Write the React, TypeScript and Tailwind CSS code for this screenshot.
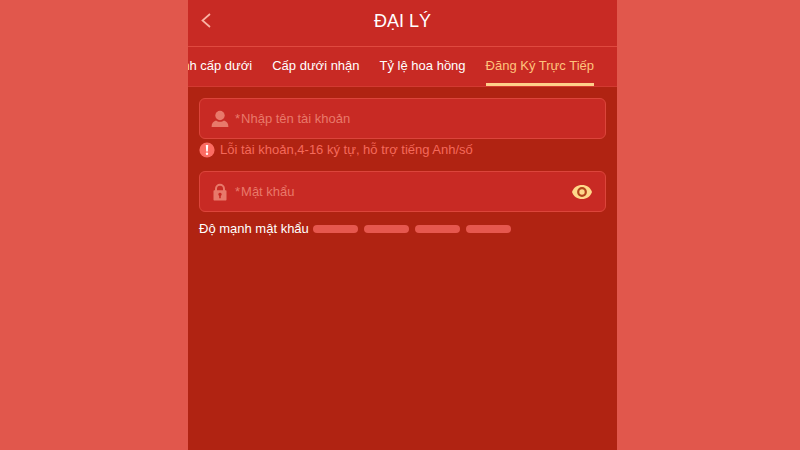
import { useState } from "react";

const TABS = ["Tài chính cấp dưới", "Cấp dưới nhận", "Tỷ lệ hoa hồng", "Đăng Ký Trực Tiếp"];

function UserIcon() {
  return (
    <svg width="18" height="18" viewBox="0 0 18 18" fill="currentColor" aria-hidden="true">
      <circle cx="9" cy="5.5" r="4.7" />
      <path d="M.6 17C.6 13.4 2 11.500 5 10.500c1 .8 2.500 1.300 4 1.300s3-.5 4-1.300c3 1 4.400 2.900 4.400 6.500z" />
    </svg>
  );
}

function LockIcon() {
  return (
    <svg width="18" height="18" viewBox="0 0 18 18" fill="currentColor" aria-hidden="true">
      <path
        fillRule="evenodd"
        d="M4 7.300V5.700a5 5 0 0 1 10 0v1.600h.5c.6 0 1 .4 1 1v8.200c0 .6-.4 1-1 1h-11c-.6 0-1-.4-1-1V8.300c0-.6.4-1 1-1zm2 0h6V5.700a3 3 0 0 0-6 0zm3 2.500a1.700 1.700 0 0 0-.8 3.200v2.300h1.600V13A1.700 1.700 0 0 0 9 9.800z"
      />
    </svg>
  );
}

function EyeIcon() {
  return (
    <svg width="20" height="14" viewBox="0 0 20 14" aria-hidden="true">
      <path fill="currentColor" d="M10 0c4.700 0 8.500 2.600 10 7-1.500 4.400-5.300 7-10 7S1.500 11.400 0 7C1.500 2.600 5.300 0 10 0z" />
      <circle cx="10" cy="7" r="3.8" fill="none" stroke="#b5451c" strokeWidth="2.2" />
    </svg>
  );
}

function AlertIcon() {
  return (
    <svg width="16" height="16" viewBox="0 0 16 16" aria-hidden="true">
      <circle cx="8" cy="8" r="7.6" fill="#fb6c62" />
      <path d="M6.800 3h2.400l-.4 6.500H7.200z" fill="#fff" />
      <circle cx="8" cy="11.8" r="1.2" fill="#fff" />
    </svg>
  );
}

const field =
  "flex h-[41px] items-center rounded-md border border-[#dc453b] bg-[#c82a24] pr-[13px] pl-[11px] text-[#e8796a]";
const input =
  "min-w-0 flex-1 bg-transparent text-[13px] text-white outline-none placeholder:text-[#e8796a]";

export default function App() {
  const [active, setActive] = useState(3);
  const [visible, setVisible] = useState(false);

  return (
    <div className="flex min-h-screen justify-center bg-[#e1574c] pl-[5px] font-['Liberation_Sans',Arial,sans-serif] text-[13px] text-white">
      <main className="w-full max-w-[429px] bg-[#b02312]">
        <header className="relative flex h-[47px] items-center justify-center border-b border-[#e0493f] bg-[#c82a24] pb-1">
          <button
            type="button"
            aria-label="Quay lại"
            className="absolute top-3 left-3 text-[#f9b3a4]"
          >
            <svg width="12" height="17" viewBox="0 0 12 17" fill="none" stroke="currentColor" strokeWidth="1.7">
              <path d="M10 2 2.500 8.500 10 15" />
            </svg>
          </button>
          <h1 className="text-lg">ĐẠI LÝ</h1>
        </header>

        {/* The strip is scrolled to its last tab */}
        <nav className="flex h-10 justify-end gap-5 overflow-hidden border-b border-[#d33a31] bg-[#c82a24] pr-[23px]">
          {TABS.map((tab, i) => (
            <button
              key={tab}
              type="button"
              onClick={() => setActive(i)}
              className={
                i === active
                  ? "shrink-0 border-b-3 border-[#ffd08a] pt-px whitespace-nowrap text-[#ffc37c]"
                  : "shrink-0 border-b-3 border-transparent pt-px whitespace-nowrap"
              }
            >
              {tab}
            </button>
          ))}
        </nav>

        <form className="px-[11px] pt-[11px]">
          <div className={field}>
            <label htmlFor="account" className="flex items-center gap-1.5 pr-px">
              <UserIcon />
              <span>*</span>
            </label>
            <input id="account" type="text" placeholder="Nhập tên tài khoản" className={input} />
          </div>
          <p className="flex h-8 items-start gap-[5px] pt-[3px] leading-4 text-[#f5695a]">
            <AlertIcon />
            Lỗi tài khoản,4-16 ký tự, hỗ trợ tiếng Anh/số
          </p>

          <div className={field}>
            <label htmlFor="password" className="flex items-center gap-1.5 pr-px">
              <LockIcon />
              <span>*</span>
            </label>
            <input
              id="password"
              type={visible ? "text" : "password"}
              placeholder="Mật khẩu"
              className={input}
            />
            <button
              type="button"
              aria-label="Hiện mật khẩu"
              onClick={() => setVisible(!visible)}
              className="text-[#ffd88a]"
            >
              <EyeIcon />
            </button>
          </div>

          <div className="flex items-center gap-1 pt-[7px]">
            <span>Độ mạnh mật khẩu</span>
            <div className="flex gap-1.5">
              {[0, 1, 2, 3].map(n => (
                <span key={n} className="h-2 w-[45px] rounded-full bg-[#e6574e]" />
              ))}
            </div>
          </div>
        </form>
      </main>
    </div>
  );
}
